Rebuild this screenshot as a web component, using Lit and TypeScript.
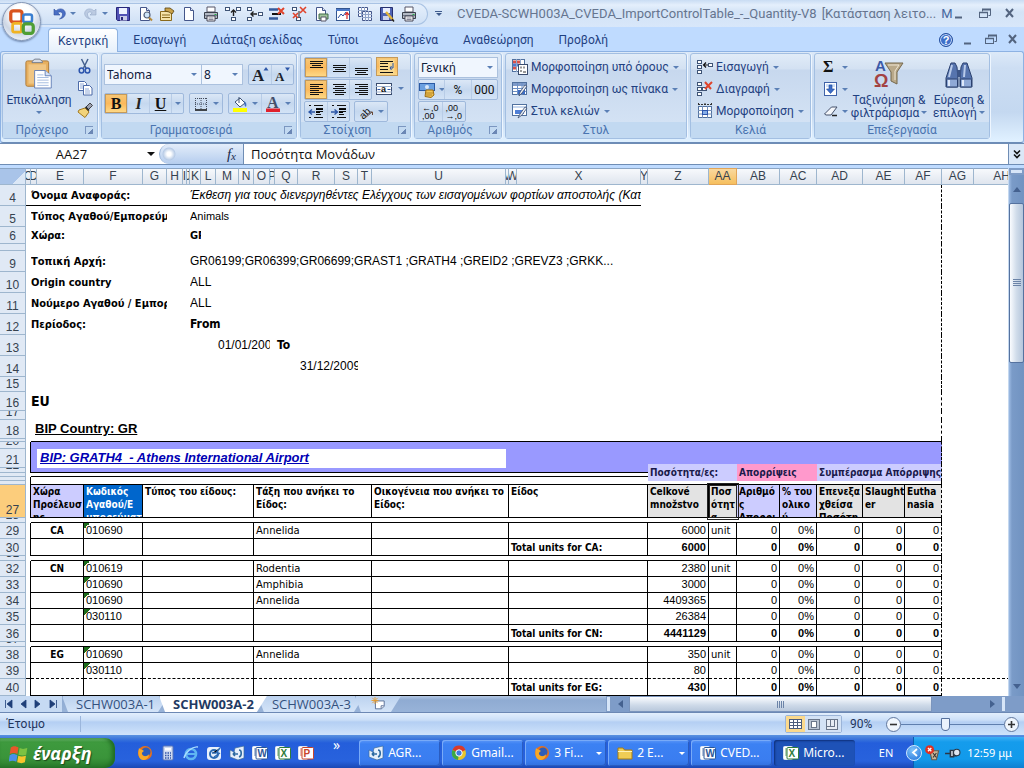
import { LitElement, html, svg, css, nothing, TemplateResult } from "lit";
import { customElement } from "lit/decorators.js";
import { classMap } from "lit/directives/class-map.js";
import { styleMap } from "lit/directives/style-map.js";

/* ---------- icons ---------- */

const icon = (body: unknown, w = 16, h = 16, vw = 16, vh = 16) =>
  html`<svg width=${w} height=${h} viewBox="0 0 ${vw} ${vh}" aria-hidden="true" class="ico">${body}</svg>`;

const arrow = html`<i class="dd"></i>`;

const lines = (rows: Array<[number, number, number]>) =>
  svg`${rows.map(([x, y, w]) => svg`<rect x=${x} y=${y} width=${w} height="1" fill="#111"/>`)}`;

const printer = svg`<path d="M4 1h8v5H4z" fill="#fff" stroke="#556"/><path d="M1.500 6.500h13v6h-13z" fill="#b3b9c4" stroke="#3a404c"/><path d="M2 9.500h12" stroke="#6f7888"/><path d="M4 10h8v5H4z" fill="#fff" stroke="#445"/><path d="M5.500 12h5M5.500 13.500h5" stroke="#889"/><rect x="11.500" y="8" width="2" height="1" fill="#2a4"/>`;
const sheet = svg`<path d="M3.500 1.500h6l3 3v10h-9z" fill="#fff" stroke="#44568a"/><path d="M9.500 1.500v3h3" fill="#dde6f5" stroke="#44568a"/>`;
const cell = (x: number, y: number, w = 4, h = 3) =>
  svg`<rect x=${x + 0.5} y=${y + 0.5} width=${w} height=${h} fill="#fff" stroke="#3f5476"/>`;

const ic = {
  undo: svg`<path d="M3 3v6h6L6.800 6.800C9 5 12 6 11.500 9c-.3 1.800-1.500 3-3 4 4-.8 6-3 5.800-6C13.800 2.500 8 1.500 5 5z" fill="#4a6fc4" stroke="#2f4f9f" stroke-width=".6"/>`,
  redo: svg`<path d="M13 3v6H7l2.200-2.200C7 5 4 6 4.500 9c.3 1.800 1.500 3 3 4-4-.8-6-3-5.800-6C2.200 2.500 8 1.500 11 5z" fill="#bccbe2" stroke="#94a8c8" stroke-width=".6"/>`,
  save: svg`<path d="M1.500 1.500h13v13h-12l-1-1z" fill="#5152b5" stroke="#26267a"/><rect x="4" y="2" width="8" height="6" fill="#eef2ff"/><rect x="5" y="10" width="7" height="4.500" fill="#c9cbe8"/><rect x="6" y="11" width="2" height="3" fill="#26267a"/>`,
  preview: svg`${sheet}<circle cx="10" cy="9" r="3" fill="#cfe6fa" stroke="#55607a" stroke-width="1.200"/><path d="M12 11.500l3 3" stroke="#b48a3c" stroke-width="2"/>`,
  props: svg`<path d="M1.500 5.500h11v9h-11z" fill="#f5e3a8" stroke="#8a6a1c"/><path d="M3 9h8M3 11.500h8" stroke="#8a6a1c"/><path d="M6 2l5 0 4 3-2 3-3-2-4-1z" fill="#caa24a" stroke="#59430f" stroke-width=".8"/>`,
  sheet,
  printer,
  rowIns: svg`${cell(0, 1)}${cell(11, 1)}${cell(6, 11)}<path d="M8.500 10V4M6 6.500L8.500 4l2.500 2.500" fill="none" stroke="#222" stroke-width="1.400"/>`,
  colIns: svg`${cell(0, 1)}${cell(0, 11)}${cell(11, 6)}<path d="M10 8H4M6.500 5.500L4 8l2.500 2.500" fill="none" stroke="#222" stroke-width="1.400"/>`,
  rowDel: svg`<path d="M0 3.500h9M0 12.500h9" stroke="#345a9c" stroke-width="2.500"/><path d="M3 8h9" stroke="#111" stroke-width="2"/><path d="M9 2l6 6M15 2L9 8" stroke="#e0442c" stroke-width="2"/>`,
  colDel: svg`${cell(1, 1)}${cell(5, 11)}<path d="M8 11V5" stroke="#222"/><path d="M9 1l6 6M15 1L9 7M2 7l5 5M7 7l-5 5" stroke="#e0442c" stroke-width="1.600"/>`,
  printDoc: svg`${sheet}<path d="M6 8h9v5H6z" fill="#9fc39a" stroke="#3f6b48"/><path d="M8 11h5v4H8z" fill="#fff" stroke="#556"/>`,
  chartUp: svg`<rect x="1.500" y="2.500" width="13" height="12" fill="#fff" stroke="#33558f"/><path d="M1 3h14v2H1z" fill="#4b78c8"/><path d="M3 12l3-4 2 2 3-4" fill="none" stroke="#2a4fa0"/><path d="M12 13V7M10 9l2-2.500L14 9" fill="none" stroke="#d22" stroke-width="1.200"/>`,
  grids: svg`<path d="M1.500 1.500h9v9h-9z" fill="#fff" stroke="#44568a"/><path d="M1 4.500h10M1 7.500h10M4.500 1v10M7.500 1v10" stroke="#8fa3c8"/><path d="M5.500 5.500h9v9h-9z" fill="#eef3fc" stroke="#44568a"/><path d="M5 8.500h10M5 11.500h10M8.500 5v10M11.500 5v10" stroke="#8fa3c8"/>`,
  saveAs: svg`<path d="M1.500 1.500h12v13h-12z" fill="#4f63b3" stroke="#26306f"/><rect x="4" y="2" width="7" height="5" fill="#e8edff"/><rect x="4" y="10" width="6" height="4" fill="#cdd3ee"/><path d="M7 6l7 8" stroke="#e3b53a" stroke-width="2.400"/><path d="M13 13l2 2.500" stroke="#222" stroke-width="1.500"/>`,

  cut: svg`<path d="M4.500 1l4.500 9M11 1L6.500 10" stroke="#44608f" stroke-width="1.500"/><ellipse cx="4.500" cy="12.500" rx="2.300" ry="2.500" fill="none" stroke="#2c55ad" stroke-width="1.500"/><ellipse cx="10.500" cy="12.500" rx="2.300" ry="2.500" fill="none" stroke="#2c55ad" stroke-width="1.500"/>`,
  copy: svg`<path d="M1.500 1.500h6l2 2v7h-8z" fill="#fff" stroke="#4c6aa8"/><path d="M3 4h4M3 6h5M3 8h5" stroke="#8fa9d8"/><path d="M6.500 5.500h6l2.500 2.500v7H6.500z" fill="#fff" stroke="#4c6aa8"/><path d="M8 9h4M8 11h5M8 13h5" stroke="#8fa9d8"/>`,
  brush: svg`<path d="M9 5l4-4 2.500 2.500-4 4z" fill="#9a9fb0" stroke="#444"/><path d="M2 8l6-2 4 4-4 5.500L1 10z" fill="#f2d37a" stroke="#a2791f"/><path d="M8.500 5l3.500 3.500" stroke="#222" stroke-width="1.600"/>`,
  growFont: svg`<text x="0" y="15" font-family="Liberation Serif" font-weight="700" font-size="17" fill="#1a1f2b">A</text><path d="M11.500 4.500L14 1l2.500 3.500z" fill="#2d57a8"/>`,
  shrinkFont: svg`<text x="1" y="15" font-family="Liberation Serif" font-weight="700" font-size="13" fill="#1a1f2b">A</text><path d="M11 1.500L13.500 5 16 1.500z" fill="#2d57a8"/>`,
  borders: svg`<path d="M2.500 2v12M8 2v12M13.500 2v12M2 2.500h12M2 8h12" stroke="#444c5c" stroke-dasharray="1 1"/><path d="M2 14h12" stroke="#111" stroke-width="1.500"/>`,
  fill: svg`<path d="M3 6l5-4 5 5-5 4z" fill="#fff" stroke="#3f5476"/><path d="M7 1v6" stroke="#3f5476"/><path d="M12 5c2 1 3 3 2 6-1-1-2-2-1.500-4z" fill="#3f6fc0"/><rect x="1" y="12" width="14" height="4" fill="#ffff00"/>`,
  fontColor: svg`<text x="2" y="12" font-family="Liberation Serif" font-weight="700" font-size="16" fill="#44506b">A</text><rect x="1" y="12.500" width="14" height="3.500" fill="#e0202c"/>`,
  alTop: lines([[2, 1, 13], [2, 3, 13], [4, 5, 9], [2, 7, 13]]),
  alMid: lines([[2, 5, 13], [2, 7, 13], [4, 9, 9], [2, 11, 13]]),
  alBot: lines([[2, 8, 13], [2, 10, 13], [4, 12, 9], [2, 14, 13]]),
  left: lines([[2, 2, 13], [2, 4, 9], [2, 6, 13], [2, 8, 9], [2, 10, 13], [2, 12, 9]]),
  center: lines([[2, 2, 13], [4, 4, 9], [2, 6, 13], [4, 8, 9], [2, 10, 13], [4, 12, 9]]),
  right: lines([[2, 2, 13], [6, 4, 9], [2, 6, 13], [6, 8, 9], [2, 10, 13], [6, 12, 9]]),
  wrap: svg`<rect x="0.500" y="0.500" width="15" height="15" fill="#f7d78e" stroke="none"/>${lines([[1, 2, 13], [1, 4, 8], [1, 7, 8], [1, 10, 8], [1, 13, 13]])}<path d="M14 4v5h-3M12.500 7L11 9l1.500 2" fill="none" stroke="#2d57a8"/>`,
  merge: svg`<rect x="0.500" y="2.500" width="15" height="11" fill="#fff" stroke="#3a4c6e"/><path d="M0 5.500h16M0 11h16" stroke="#9fb2d0"/><text x="5" y="11" font-family="Liberation Sans" font-weight="700" font-size="9" fill="#111">a</text><path d="M1.500 8.500h3M11.500 8.500h3" stroke="#2d57a8"/>`,
  outdent: svg`${lines([[1, 1, 2], [6, 1, 9], [8, 4, 7], [8, 7, 7], [8, 10, 5], [1, 13, 2], [6, 13, 9]])}<rect x="8" y="5" width="7" height="1"/><rect x="8" y="8" width="4" height="1"/><path d="M7 8H1M4 5.500L1 8l3 2.500" fill="none" stroke="#2d57a8" stroke-width="1.400"/>`,
  indent: svg`${lines([[1, 1, 2], [6, 1, 9], [8, 4, 7], [8, 7, 7], [8, 10, 5], [1, 13, 2], [6, 13, 9]])}<rect x="8" y="5" width="7" height="1"/><rect x="8" y="8" width="4" height="1"/><path d="M0 8h6M3.500 5.500L6.500 8l-3 2.500" fill="none" stroke="#2d57a8" stroke-width="1.400"/>`,
  orient: svg`<text x="0" y="13" transform="rotate(-45 6 8)" font-family="Liberation Sans" font-size="10" fill="#111">ab</text><path d="M7 14l7-6M11 8h3.500v3" fill="none" stroke="#6a4a3a"/>`,
  money: svg`<rect x="0.500" y="1.500" width="15" height="7" fill="#6ba0e0" stroke="#2b5aa4"/><circle cx="8" cy="5" r="2" fill="#d8e8fb"/><path d="M7 8h7l1 5-3 2.500-6-1z" fill="#f1c453" stroke="#9c6c12"/><path d="M6 11h8M7 13h6" stroke="#9c6c12" stroke-width=".7"/>`,
  cond: svg`<rect x="0.500" y="0.500" width="12" height="12" fill="#fff" stroke="#51719f"/><path d="M1 3h7M1 9h4" stroke="#d7504a" stroke-width="3"/><path d="M1 6h5" stroke="#4e7bd0" stroke-width="3"/><path d="M4.500 0v13M8.500 0v5" stroke="#8fa6c9"/><rect x="6.500" y="5.500" width="9" height="10" fill="#fff" stroke="#3a4c6e"/><path d="M9 7.500v2M12 7.500v2M8 12h2M11 13h3" stroke="#333"/>`,
  tableFmt: svg`<rect x="0.500" y="1.500" width="14" height="12" fill="#fff" stroke="#51719f"/><path d="M1 3.500h13" stroke="#7f9bc9" stroke-width="3"/><path d="M1 7.500h13M1 10.500h13M5.500 2v12M10 2v12" stroke="#6d8fc4"/><path d="M6 9h7v4H6z" fill="#3c6cc6"/><path d="M15 5l-5 7-3 3 1-4 5-7z" fill="#e9edf5" stroke="#3a4c6e" stroke-width=".8"/>`,
  cellStyle: svg`<rect x="0.500" y="1.500" width="14" height="11" fill="#fff" stroke="#51719f"/><path d="M1 4h13" stroke="#c7d7ef" stroke-width="2"/><path d="M3 7h9v4H3z" fill="#4f7fd6"/><path d="M15 5l-5 7-4 3 2-4 5-7z" fill="#e9edf5" stroke="#3a4c6e" stroke-width=".8"/>`,
  insert: svg`${cell(0, 1, 4, 3)}${cell(0, 6, 4, 3)}${cell(0, 11, 4, 3)}<path d="M7 6h5M9 3.500L6.500 6 9 8.500" fill="none" stroke="#111" stroke-width="1.200"/>${cell(11, 4, 4, 3)}`,
  del: svg`${cell(0, 1, 4, 3)}${cell(0, 6, 4, 3)}${cell(0, 11, 4, 3)}${cell(5, 6, 4, 3)}<path d="M8 1l6 7M15 1L8 8" stroke="#e0442c" stroke-width="2"/>`,
  format: svg`<rect x="1.500" y="3.500" width="13" height="11" fill="#fff" stroke="#51719f"/><path d="M1 7.500h14M1 11h14M5.500 3v12M10.500 3v12" stroke="#7590bb"/><path d="M1 1.500h14M1.500 0v3M14.500 0v3M8 0v3" stroke="#333" stroke-dasharray="2 1"/><rect x="5.500" y="7.500" width="5" height="4" fill="#86aee8" stroke="#2c55ad"/>`,
  fillDown: svg`<rect x="1.500" y="1.500" width="12" height="13" fill="#fff" stroke="#3f62a8"/><rect x="3" y="3" width="9" height="3" fill="#cfe0f8"/><path d="M6 4h3v4h2.500l-4 4.500L3.500 8H6z" fill="#3c6cc6" stroke="#204a9c" stroke-width=".6"/>`,
  eraser: svg`<path d="M1.500 11l7-7h5.500l-6 8H3z" fill="#f4f6fa" stroke="#44506b"/><path d="M9 12.500h5" stroke="#222" stroke-width="1.500"/>`,
};

const paste = svg`<rect x="1" y="3" width="26" height="29" rx="2" fill="#e7b060" stroke="#a9722a"/><rect x="4" y="7" width="20" height="22" fill="#f0c684"/><path d="M8 5c0-3 2-2 3-4h6c1 2 3 1 3 4z" fill="#d6dbe4" stroke="#6a7384"/><path d="M11 14h12l7 6v14H11z" fill="#fff" stroke="#5a78b4"/><path d="M23 14v6h7" fill="#d6e2f5" stroke="#5a78b4"/><path d="M14 19h7M14 22h13M14 25h13M14 28h13M14 31h13" stroke="#9db6dd"/>`;
const sortFilter = svg`<path d="M11 5h18l-6 9v12l-6-3v-9z" fill="#b9a98a" stroke="#75684d"/><path d="M14 7h11l-4 6v9" fill="none" stroke="#eee5d2"/><text x="1" y="13" font-family="Liberation Sans" font-weight="700" font-size="15" fill="#3c5aa8">A</text><text x="0" y="29" font-family="Liberation Sans" font-weight="700" font-size="18" fill="#a34242">Ω</text>`;
const binoc = svg`<path d="M6 2h4l2 4 1 12v8H1v-9z" fill="#5674ae" stroke="#2b416f"/><path d="M22 2h-4l-2 4-1 12v8h12v-9z" fill="#5674ae" stroke="#2b416f"/><rect x="12" y="9" width="4" height="7" fill="#3c5587"/><path d="M4 16l3-12M19 16l1-12" stroke="#b9cbea" stroke-width="2"/><rect x="1.500" y="18" width="11" height="8" rx="1" fill="#8fa9d6" stroke="#2b416f"/><rect x="15.500" y="18" width="11" height="8" rx="1" fill="#8fa9d6" stroke="#2b416f"/><path d="M4 19v6M18 19v6" stroke="#dfe9fa" stroke-width="2"/>`;
const officeLogo = svg`<g fill="none"><rect x="3" y="3" width="9" height="9" rx="2" stroke="#d9541e" stroke-width="2.600"/><rect x="13" y="6" width="7" height="6" rx="1.500" stroke="#3b7fd0" stroke-width="2"/><rect x="4.500" y="13" width="7" height="7" rx="1.500" stroke="#f0b323" stroke-width="2.200"/><rect x="13" y="13.500" width="8" height="7.500" rx="2" stroke="#4f9e34" stroke-width="2.600"/></g>`;

const winMin = svg`<path d="M2 10.500h7" stroke="#53647f" stroke-width="2"/>`;
const winRestore = svg`<path d="M4.500 4.500v-2h8v6h-2" fill="none" stroke="#53647f"/><path d="M4 2.500h9" stroke="#53647f" stroke-width="2"/><rect x="1.500" y="5.500" width="8" height="5" fill="none" stroke="#53647f"/><path d="M1 5.500h9" stroke="#53647f" stroke-width="1.500"/>`;
const winClose = svg`<path d="M3 2l7 8M10 2L3 10" stroke="#53647f" stroke-width="2"/>`;

const firefox = svg`<circle cx="8" cy="8" r="7" fill="#e8701a"/><circle cx="9" cy="7" r="4.500" fill="#2d5db8"/><path d="M2 3c1 2 3 1 5 3-2 1-3 3-1 4.500s5 .5 6-1.500c0 4-3 6-6 6s-6-4-4-12z" fill="#f7a928"/>`;
const calc = svg`<rect x="3" y="1" width="10" height="14" rx="1" fill="#cfdaf0" stroke="#5a76b8"/><rect x="5" y="3" width="6" height="2.500" fill="#fff"/><path d="M5 8h1.500M7.500 8H9M10 8h1M5 10.500h1.500M7.500 10.500H9M10 10.500h1M5 13h1.500M7.500 13H9M10 13h1" stroke="#3357a8" stroke-width="1.500"/>`;
const ie = svg`<circle cx="8" cy="9" r="5" fill="none" stroke="#5fb6f2" stroke-width="2.600"/><path d="M4 9h9" stroke="#5fb6f2" stroke-width="2"/><path d="M1 13C2 8 9 1 15 2" fill="none" stroke="#a9dcff" stroke-width="1.400"/>`;
const outlook = svg`<rect x="1" y="2" width="14" height="13" rx="3" fill="#e8f1fc"/><circle cx="8" cy="9" r="4" fill="none" stroke="#2b6bb4" stroke-width="2"/><path d="M6 8h4l4-5M8 12l6-4" stroke="#2b6bb4" stroke-width="1.400"/>`;
const mail = svg`<path d="M1 5l4 2 1-4 9-2v12l-6 2-8-3z" fill="#e6effb" stroke="#3a6a9c" stroke-width=".7"/><path d="M4 9h5M4 9l2-2M4 9l2 2M10 5c3 0 3 6 0 7" fill="none" stroke="#2d6aa0" stroke-width="1.600"/>`;
const office = (ch: string, c: string) =>
  svg`<rect x="0.500" y="1.500" width="9" height="13" rx="1" fill="#fff" stroke="#dfe7f3"/><path d="M2 4h5M2 6h5M2 8h5M2 10h5" stroke=${c} stroke-width=".7"/><rect x="4" y="2.500" width="11.500" height="11.500" rx="1" fill="#fff" stroke=${c}/><text x="5.500" y="12" font-family="Liberation Sans" font-weight="700" font-size="10" fill=${c}>${ch}</text>`;
const chrome = svg`<circle cx="8" cy="8" r="7" fill="#e8c52c"/><path d="M8 8L1.500 5A7 7 0 0 1 14.500 5z" fill="#d93a2b"/><path d="M8 8L1.500 5A7 7 0 0 0 7 15z" fill="#3aa845"/><circle cx="8" cy="8" r="3.200" fill="#3e7be0" stroke="#fff"/>`;
const folder = svg`<path d="M1 3h5l1.500 2H15v9H1z" fill="#f0cd55" stroke="#a57c16"/><path d="M1 6.500h14" stroke="#fff3b8"/>`;
const winFlag = svg`<path d="M1 5c3-2 5-1 7 0l-1 6c-2-1-4-1.500-7 0z" fill="#e8572a"/><path d="M9 5.500c2 1 4 1 7 0l-1 6c-2 1-4 1-7 0z" fill="#7cc242"/><path d="M0 12c3-2 5-1 7 0l-1 6c-2-1-4-1.500-7 0z" fill="#4a8fe8"/><path d="M7.800 12.500c2 1 4 1 7 0l-1 6c-2 1-4 1-7 0z" fill="#f7c52c"/>`;

const base = css`
  * { box-sizing: border-box; }
  button, input, select { font: inherit; color: inherit; margin: 0; padding: 0; border: 0; background: none; border-radius: 0; outline: 0; }
  button { display: flex; align-items: center; justify-content: center; white-space: nowrap; cursor: default; }
  .ico { display: block; flex: none; }
  .dd { width: 0; height: 0; flex: none; border: 3px solid transparent; border-top-color: #5a7fb5; border-bottom: 0; }
`;

/* ---------- ribbon ---------- */

@customElement("excel-ribbon")
export class ExcelRibbon extends LitElement {
  static styles = [
    base,
    css`
      :host { display: block; position: relative; font: 12px/16px Roboto, "Noto Sans", sans-serif; color: #1f4181; background: #bfdbff; }
      .title { height: 27px; display: flex; align-items: center; background: linear-gradient(#c9dcf3 0, #e4effc 5px, #d3e3f6 12px, #d8e7fa); padding-right: 8px; }
      .qat { display: flex; align-items: center; gap: 6px; height: 22px; padding: 0 10px 0 51px; border: 1px solid #a9c3e4; border-left: 0; border-radius: 0 12px 12px 0; background: linear-gradient(#e6f0fc, #cfe0f5); }
      .qat .pair { gap: 3px; }
      .qat .dd { margin-right: 1px; }
      .more { margin-left: 7px; flex-direction: column; gap: 1px; border: 0; }
      .more::before { content: ""; width: 7px; height: 1px; background: #3d5a8c; }
      .more .dd { border-top-color: #3d5a8c; }
      .name { flex: 1; min-width: 0; margin-left: 15px; white-space: pre; overflow: hidden; color: #66758f; font-size: 13px; line-height: 18px; display: flex; gap: 5px; }
      .name b { font-weight: 400; color: #47679f; }
      .win { display: flex; gap: 12px; }
      .tabs { height: 24px; display: flex; align-items: stretch; padding: 1px 5px 0 48px; gap: 5px; }
      .tabs button { padding: 0 10px; }
      .tabs .on { background: linear-gradient(#fff, #e6f0fb); border: 1px solid #8fb2df; border-bottom: 0; border-radius: 4px 4px 0 0; position: relative; z-index: 1; margin-bottom: -1px; padding: 0 9px; }
      .tabs .grow { flex: 1; }
      .tabs .win { align-items: center; gap: 9px; }
      .tabs .win button { padding: 0; }
      .help { width: 14px; height: 14px; border-radius: 50%; background: #3e6fc9; border: 1px solid #25509f; color: #fff; font: bold 11px/12px "Liberation Sans", sans-serif; box-shadow: inset 0 0 0 1px #cfe0fb; }
      .orb { position: absolute; left: 2px; top: 2px; width: 39px; height: 39px; border-radius: 50%; border: 1px solid #8496b4; background: radial-gradient(circle at 50% 30%, #fff 30%, #cdd6e4 60%, #eef3fb 85%); box-shadow: 0 1px 2px #6b83a9; z-index: 2; }
      .ribbon { height: 92px; border: 1px solid #8db2e3; border-radius: 3px; border-bottom-color: #6d8db8; background: linear-gradient(#dce9f8 0, #cddef3 16px, #c4d8f0 60px, #dff0ff 88px); display: flex; padding: 1px 1px 3px; gap: 3px; }
      .group { display: flex; flex-direction: column; border: 1px solid #a3bfe2; border-radius: 3px; background: linear-gradient(#e1ecf8 0, #d3e1f2 15px, #c7d8ee 16px, #d7e5f6); box-shadow: 1px 0 0 #eef6ff; }
      .body { flex: 1; min-height: 0; display: flex; }
      .cap { height: 16px; flex: none; line-height: 16px; background: #c2d9f1; color: #4a74b0; display: flex; justify-content: center; position: relative; }
      .launched { padding-right: 16px; }
      .launch { position: absolute; right: 4px; top: 4px; width: 8px; height: 8px; border: 1px solid #7b96c0; border-right: 0; border-bottom: 0; background: linear-gradient(135deg, transparent 45%, #6b87b5 45%) right bottom / 5px 5px no-repeat; }
      .col { display: flex; flex-direction: column; }
      .row { display: flex; }
      .set { display: flex; border: 1px solid #9fb9dc; border-radius: 2px; background: linear-gradient(#dbe7f6, #c5d8ef 50%, #d3e3f6); }
      .set button, .solo { height: 19px; min-width: 22px; gap: 4px; }
      .set .slim { min-width: 12px; }
      .set .on, .solo.on { background: linear-gradient(#f6c878, #fbb95c 50%, #fedc8a); outline: 1px solid #c59a5a; outline-offset: -1px; }
      .set button + button { border-left: 1px solid #b8cce6; }
      select { appearance: none; background: #f0f6fe url("data:image/svg+xml,%3Csvg xmlns='http://www.w3.org/2000/svg' width='6' height='3'%3E%3Cpath d='M0 0h6L3 3z' fill='%235a7fb5'/%3E%3C/svg%3E") right 4px center no-repeat; border: 1px solid #abc1de; height: 21px; padding-left: 2px; color: #10203c; }
      .g1 { width: 96px; } .g2 { width: 196px; } .g3 { width: 111px; } .g4 { width: 88px; } .g5 { width: 182px; } .g6 { width: 121px; } .g7 { width: 176px; }
      .big { flex-direction: column; line-height: 13px; }
      .pasteBtn { width: 72px; justify-content: flex-start; padding-top: 4px; gap: 4px; }
      .clip { gap: 6px; padding-top: 4px; width: 20px; align-items: center; }
      .fontBody { padding: 10px 2px 0; flex-direction: column; gap: 8px; }
      .fontBody .row { gap: 5px; }
      .fontBody select { font-family: "Noto Sans", sans-serif; }
      .fname { width: 98px; } .fsize { width: 42px; margin-left: -6px; }
      .b { font: bold 16px "Liberation Serif", serif; color: #111; } .i { font: italic bold 16px "Liberation Serif", serif; color: #222; } .u { font: bold 16px "Liberation Serif", serif; color: #111; text-decoration: underline; }
      .wide button { padding: 0 3px; }
      .al { padding: 3px 3px 0; flex-direction: column; gap: 1px; }
      .al .row { gap: 4px; }
      .merge { gap: 6px; }
      .num { padding: 3px 3px 0; flex-direction: column; gap: 1px; }
      .num .set { align-self: stretch; }
      .num .set.part { align-self: flex-start; }
      .num .set button { padding: 0 3px; flex: 1; min-width: 20px; color: #111; }
      .dec { font: 9px/8px "Liberation Sans", sans-serif; text-align: left; white-space: pre; }
      .list { padding: 2px 0 0 6px; flex-direction: column; justify-content: flex-start; align-items: flex-start; }
      .list button { height: 22px; gap: 3px; }
      .list .dd { margin-left: 1px; }
      .ed { padding: 2px 0 0 8px; gap: 0; }
      .ed .col { width: 28px; }
      .ed .col button { height: 22px; gap: 3px; justify-content: flex-start; }
      .sigma { font: bold 16px "Liberation Serif", serif; color: #111; width: 16px; text-align: left; }
      .sort { width: 76px; } .find { width: 58px; margin-left: 3px; }
      .ed .big { height: 64px; gap: 5px; justify-content: flex-end; }
      .two { display: block; text-align: center; line-height: 13px; }
      .two .dd { display: inline-block; vertical-align: 3px; margin-left: 2px; }
    `,
  ];

  private group(cls: string, label: string, body: TemplateResult, launch = false) {
    return html`<section class="group ${cls}">${body}
      <div class="cap ${launch ? "launched" : ""}">${label}${launch ? html`<button class="launch" aria-label=${label}></button>` : nothing}</div>
    </section>`;
  }

  render() {
    const quick: Array<[string, unknown]> = [
      ["Αποθήκευση", ic.save], ["Προεπισκόπηση", ic.preview], ["Ιδιότητες", ic.props], ["Δημιουργία", ic.sheet],
      ["Εκτύπωση", ic.printer], ["Εισαγωγή γραμμών", ic.rowIns], ["Εισαγωγή στηλών", ic.colIns], ["Διαγραφή γραμμών", ic.rowDel],
      ["Διαγραφή στηλών", ic.colDel], ["Γρήγορη εκτύπωση", ic.printDoc], ["Γράφημα", ic.chartUp], ["Φύλλα", ic.grids],
      ["Αποθήκευση ως", ic.saveAs], ["Εκτυπωτής", ic.printer],
    ];
    const menu = ["Εισαγωγή", "Διάταξη σελίδας", "Τύποι", "Δεδομένα", "Αναθεώρηση", "Προβολή"];
    return html`
      <button class="orb" aria-label="Office">${icon(officeLogo, 30, 30, 24, 24)}</button>
      <header class="title">
        <div class="qat">
          <button class="pair" aria-label="Αναίρεση">${icon(ic.undo)}${arrow}</button>
          <button class="pair" aria-label="Επανάληψη">${icon(ic.redo)}${arrow}</button>
          ${quick.map(([l, g]) => html`<button aria-label=${l}>${icon(g)}</button>`)}
        </div>
        <button class="more" aria-label="Προσαρμογή">${arrow}</button>
        <div class="name"><span>CVEDA-SCWH003A_CVEDA_ImportControlTable_-_Quantity-V8</span><span>[Κατάσταση λειτο...</span><b>M</b></div>
        <div class="win">
          <button aria-label="Ελαχιστοποίηση">${icon(winMin, 13, 13, 13, 13)}</button>
          <button aria-label="Επαναφορά">${icon(winRestore, 13, 13, 13, 13)}</button>
          <button aria-label="Κλείσιμο">${icon(winClose, 13, 13, 13, 13)}</button>
        </div>
      </header>
      <nav class="tabs">
        <button class="on">Κεντρική</button>
        ${menu.map((m) => html`<button>${m}</button>`)}
        <span class="grow"></span>
        <div class="win">
          <button class="help" aria-label="Βοήθεια">?</button>
          <button aria-label="Ελαχιστοποίηση βιβλίου">${icon(winMin, 13, 13, 13, 13)}</button>
          <button aria-label="Επαναφορά βιβλίου">${icon(winRestore, 13, 13, 13, 13)}</button>
          <button aria-label="Κλείσιμο βιβλίου">${icon(winClose, 13, 13, 13, 13)}</button>
        </div>
      </nav>
      <div class="ribbon">
        ${this.group("g1", "Πρόχειρο", html`<div class="body">
          <button class="big pasteBtn">${icon(paste, 28, 32, 32, 36)}<span>Επικόλληση</span>${arrow}</button>
          <div class="col clip">
            <button aria-label="Αποκοπή">${icon(ic.cut)}</button>
            <button aria-label="Αντιγραφή">${icon(ic.copy)}</button>
            <button aria-label="Πινέλο">${icon(ic.brush)}</button>
          </div></div>`, true)}
        ${this.group("g2", "Γραμματοσειρά", html`<div class="body fontBody">
          <div class="row">
            <select class="fname" aria-label="Γραμματοσειρά"><option>Tahoma</option></select>
            <select class="fsize" aria-label="Μέγεθος"><option>8</option></select>
            <div class="set"><button aria-label="Μεγέθυνση">${icon(ic.growFont, 17, 17, 17, 17)}</button><button aria-label="Σμίκρυνση">${icon(ic.shrinkFont, 17, 17, 17, 17)}</button></div>
          </div>
          <div class="row">
            <div class="set"><button class="b on">B</button><button class="i">I</button><button class="u">U</button><button class="slim" aria-label="Τύπος υπογράμμισης">${arrow}</button></div>
            <div class="set wide"><button aria-label="Περιγράμματα">${icon(ic.borders)}${arrow}</button></div>
            <div class="set wide"><button aria-label="Χρώμα γεμίσματος">${icon(ic.fill)}${arrow}</button><button aria-label="Χρώμα γραμματοσειράς">${icon(ic.fontColor)}${arrow}</button></div>
          </div></div>`, true)}
        ${this.group("g3", "Στοίχιση", html`<div class="body al">
          <div class="row">
            <div class="set"><button class="on" aria-label="Επάνω">${icon(ic.alTop)}</button><button aria-label="Μέση">${icon(ic.alMid)}</button><button aria-label="Κάτω">${icon(ic.alBot)}</button></div>
            <button class="solo on" aria-label="Αναδίπλωση">${icon(ic.wrap)}</button>
          </div>
          <div class="row">
            <div class="set"><button class="on" aria-label="Αριστερά">${icon(ic.left)}</button><button aria-label="Κέντρο">${icon(ic.center)}</button><button aria-label="Δεξιά">${icon(ic.right)}</button></div>
            <button class="solo merge" aria-label="Συγχώνευση">${icon(ic.merge)}${arrow}</button>
          </div>
          <div class="row">
            <div class="set"><button aria-label="Μείωση εσοχής">${icon(ic.outdent)}</button><button aria-label="Αύξηση εσοχής">${icon(ic.indent)}</button></div>
            <div class="set wide"><button aria-label="Προσανατολισμός">${icon(ic.orient)}${arrow}</button></div>
          </div></div>`, true)}
        ${this.group("g4", "Αριθμός", html`<div class="body num">
          <select aria-label="Μορφή αριθμού"><option>Γενική</option></select>
          <div class="set"><button aria-label="Νόμισμα">${icon(ic.money)}${arrow}</button><button>%</button><button>000</button></div>
          <div class="set part"><button class="dec">${"←,0\n,00"}</button><button class="dec">${",00\n→,0"}</button></div>
          </div>`, true)}
        ${this.group("g5", "Στυλ", html`<div class="body list">
          <button>${icon(ic.cond)}Μορφοποίηση υπό όρους${arrow}</button>
          <button>${icon(ic.tableFmt)}Μορφοποίηση ως πίνακα${arrow}</button>
          <button>${icon(ic.cellStyle)}Στυλ κελιών${arrow}</button></div>`)}
        ${this.group("g6", "Κελιά", html`<div class="body list">
          <button>${icon(ic.insert)}Εισαγωγή${arrow}</button>
          <button>${icon(ic.del)}Διαγραφή${arrow}</button>
          <button>${icon(ic.format)}Μορφοποίηση${arrow}</button></div>`)}
        ${this.group("g7", "Επεξεργασία", html`<div class="body ed">
          <div class="col">
            <button><span class="sigma">Σ</span>${arrow}</button>
            <button aria-label="Συμπλήρωση">${icon(ic.fillDown)}${arrow}</button>
            <button aria-label="Απαλοιφή">${icon(ic.eraser)}${arrow}</button>
          </div>
          <button class="big sort">${icon(sortFilter, 30, 31, 30, 31)}<span class="two">Ταξινόμηση &amp;<br />φιλτράρισμα${arrow}</span></button>
          <button class="big find">${icon(binoc, 28, 28, 28, 28)}<span class="two">Εύρεση &amp;<br />επιλογή${arrow}</span></button>
          </div>`)}
      </div>`;
  }
}

/* ---------- worksheet ---------- */

const COLS: Array<[string, number]> = [
  ["C", 5], ["D", 6], ["E", 47], ["F", 59], ["G", 24], ["H", 16], ["I", 4], ["J", 3], ["K", 11], ["L", 15], ["M", 23],
  ["N", 15], ["O", 16], ["P", 5], ["Q", 23], ["R", 37], ["S", 23], ["T", 14], ["U", 134], ["V", 3], ["W", 8], ["X", 124],
  ["Y", 7], ["Z", 61], ["AA", 28], ["AB", 43], ["AC", 37], ["AD", 46], ["AE", 42], ["AF", 37], ["AG", 32], ["AH", 0],
];
const at = (name: string) => COLS.findIndex(([n]) => n === name);

interface Cell { from: string; to: string; text?: string; cls?: string; rows?: number; skip?: boolean; }
interface Row { n: string; h: number; cells: Cell[]; cls?: string; headRows?: number; headSkip?: boolean; }

const c = (range: string, text = "", cls = "", rows = 1): Cell => {
  const [from, to] = range.split(":");
  return { from, to: to ?? from, text, cls, rows };
};
const skip = (range: string): Cell => ({ ...c(range), skip: true });
const row = (n: string, h: number, ...cells: Cell[]): Row => ({ n, h, cells });

const BLOCKS = ["D:E", "F", "G:N", "O:T", "U:V", "W:Y", "Z", "AA", "AB", "AC", "AD", "AE", "AF"];
const record = (n: string, h: number, values: string[], kind = ""): Row =>
  row(n, h, c("C", "", "r"), ...BLOCKS.map((b, i) => {
    const cls = ["r", "b", kind];
    if (i === 0) cls.push("country");
    if (i === 1 && values[i]) cls.push("code");
    if (i === 3) cls.push("taxon");
    if (i === 5) cls.push("tot");
    if (i >= 6 && i !== 7) cls.push("num");
    if (i === 7) cls.push("taxon");
    return c(b, values[i] ?? "", cls.join(" "));
  }));
const line = (n: string, country: string, code: string, order: string, qty: string, unit: string, kind = "") =>
  record(n, 16, [country, code, "", order, "", "", qty, unit, "0", "0%", "0", "0", "0"], kind);
const total = (n: string, country: string, qty: string) =>
  record(n, 17, ["", "", "", "", "", `Total units for ${country}:`, qty, "", "0", "0%", "0", "0", "0"], "strong");
const spacer = (n: string): Row => row(n, 5, c("D:AF", "", "b"));

const ROWS: Row[] = [
  row("4", 21, c("C", "", "b"), c("D:G", "Όνομα Αναφοράς:", "b lab"), c("H:J", "", "b"), c("K:X", "Έκθεση για τους διενεργηθέντες Ελέγχους των εισαγομένων φορτίων αποστολής (Κατηγορία)", "b ital")),
  row("5", 21, c("D:G", "Τύπος Αγαθού/Εμπορεύματος", "lab"), c("K:X", "Animals", "small")),
  row("6", 17, c("D:G", "Χώρα:", "lab"), c("K", "GR", "lab")),
  row("", 7),
  row("9", 21, c("D:G", "Τοπική Αρχή:", "lab"), c("K:X", "GR06199;GR06399;GR06699;GRAST1 ;GRATH4 ;GREID2 ;GREVZ3 ;GRKK...", "val")),
  row("10", 21, c("D:G", "Origin country", "lab"), c("K:X", "ALL", "val")),
  row("11", 21, c("D:G", "Νούμερο Αγαθού / Εμπορεύματος", "lab"), c("K:X", "ALL", "val")),
  row("12", 21, c("D:G", "Περίοδος:", "lab"), c("K:X", "From", "lab mid")),
  row("13", 21, c("M:O", "01/01/2009", "val pad"), c("Q:X", "To", "lab mid pad")),
  row("14", 21, c("R:S", "31/12/2009", "val pad")),
  row("15", 15),
  row("16", 19, c("D:G", "EU", "eu")),
  row("17", 9),
  row("18", 19, c("D:S", "BIP Country: GR", "bip")),
  row("", 3, c("D:AF", "", "b")),
  row("20", 7, c("C", "", "r"), c("D:AF", "", "band")),
  { ...row("21", 15, c("C", "", "r"), c("D", "", "band"), c("E:U", "BIP: GRATH4  - Athens International Airport", "airport", 2), c("V:AF", "", "band")), headRows: 2 },
  { ...row("", 4, c("C", "", "r"), c("D", "", "band"), skip("E:U"), c("V:Y", "", "band"), c("Z:AA", "Ποσότητα/ες:", "tag", 4), c("AB:AC", "Απορρίψεις", "tag pink", 4), c("AD:AF", "Συμπέρασμα Απόρριψης:", "tag", 4)), headSkip: true },
  row("22", 5, c("C", "", "r"), c("D:Y", "", "band b"), skip("Z:AA"), skip("AB:AC"), skip("AD:AF")),
  row("23", 4, c("D:Y", "", "b"), skip("Z:AA"), skip("AB:AC"), skip("AD:AF")),
  row("25", 4, c("C", "", "r"), c("D:Y"), skip("Z:AA"), skip("AB:AC"), skip("AD:AF")),
  row("", 4, c("C", "", "r"), c("D:AF", "", "b")),
  { ...row("27", 33,
    c("C", "", "r"),
    c("D:E", "Χώρα\nΠροέλευσ\nης", "r b th lav"), c("F", "Κωδικός\nΑγαθού/Ε\nμπορεύματ", "r b th blue"),
    c("G:N", "Τύπος του είδους:", "r b th"), c("O:T", "Τάξη που ανήκει το\nΕίδος:", "r b th"),
    c("U:V", "Οικογένεια που ανήκει το\nΕίδος:", "r b th"), c("W:Y", "Είδος", "r b th"),
    c("Z", "Celkové\nmnožstvo", "r b th gray"), c("AA", "Ποσ\nότητ\nα", "r b th gray sel"),
    c("AB", "Αριθμό\nς\nΑπορρι", "r b th lav"), c("AC", "% του\nολικο\nύ", "r b th lav"),
    c("AD", "Επενεξα\nχθείσα\nΠοσότη", "r b th gray"), c("AE", "Slaught\ner", "r b th gray"), c("AF", "Eutha\nnasia", "r b th gray")), cls: "active" },
  spacer("28"),
  line("29", "CA", "010690", "Annelida", "6000", "unit"),
  total("30", "CA", "6000"),
  spacer("31"),
  line("32", "CN", "010619", "Rodentia", "2380", "unit"),
  line("33", "", "010690", "Amphibia", "3000", ""),
  line("34", "", "010690", "Annelida", "4409365", ""),
  line("35", "", "030110", "", "26384", ""),
  total("36", "CN", "4441129"),
  spacer("37"),
  line("38", "EG", "010690", "Annelida", "350", "unit"),
  { ...line("39", "", "030110", "", "80", ""), cls: "page" },
  total("40", "EG", "430"),
];

@customElement("sheet-grid")
export class SheetGrid extends LitElement {
  static styles = [
    base,
    css`
      :host { display: flex; min-height: 0; overflow: hidden; background: #fff; font: 12px/14px "Liberation Sans", sans-serif; color: #000; }
      .view { flex: 1; min-width: 0; overflow: hidden; }
      table { table-layout: fixed; width: calc(100% + 22px); border-spacing: 0; }
      th, td { padding: 0; font-weight: 400; line-height: 0; text-align: left; overflow: hidden; vertical-align: top; }
      .in { height: calc(var(--h) - 1px); display: flex; align-items: center; line-height: 13px; white-space: pre; overflow: hidden; }
      thead th { height: 17px; border-right: 1px solid #9eb6ce; border-bottom: 1px solid #9eb6ce; border-top: 1px solid #8ba5c4; background: linear-gradient(#f7f9fc, #dfe5ee); color: #36424f; }
      thead .in { --h: 16px; justify-content: center; }
      thead .hot { background: linear-gradient(#f9d99f, #f6bf5e); border-color: #e0a55a; }
      thead .corner { background: linear-gradient(135deg, #a9c4e9 70%, #dbe7f6 70%); }
      tbody th { background: #e0e9f5; border-right: 1px solid #9eb6ce; border-bottom: 1px solid #9eb6ce; color: #36424f; }
      tbody th .in { align-items: flex-end; justify-content: center; line-height: 14px; }
      tr.active th { background: #fccd7c; }
      .r { border-right: 1px solid #000; }
      .b { border-bottom: 1px solid #000; }
      .end { border-right: 1px dashed #000; }
      tr.page td { border-bottom: 1px dashed #000; }
      .lab, .tot, .country, .th, .tag { font-family: "DejaVu Sans Condensed", "DejaVu Sans", sans-serif; font-weight: 700; font-size: 11px; }
      .mid .in { font-size: 12px; }
      .small { font-size: 11px; }
      .pad .in { padding-left: 2px; }
      .ital { font-style: italic; font-size: 12px; }
      .eu { font: bold 14px "DejaVu Sans Condensed", sans-serif; }
      .bip { font: bold 13px "Liberation Sans", sans-serif; text-decoration: underline; }
      .bip .in { padding-left: 4px; }
      .bip .in, .airport .in { line-height: 16px; }
      .band { background: #9999ff; }
      .airport { font: italic bold 13px "Liberation Sans", sans-serif; color: #0000b4; text-decoration: underline; vertical-align: top; }
      .airport .in { height: 18px; padding-left: 3px; }
      .tag { background: #ccccff; color: #1a1a4a; font-size: 10px; }
      .tag .in { height: 16px; padding-left: 2px; }
      .pink { background: #ff99cc; }
      .th { font-size: 10px; }
      .th .in { align-items: flex-start; padding: 0 2px; line-height: 13px; }
      .lav { background: #ccccff; }
      .gray { background: #e3e3e3; }
      .blue { background: #0066cc; color: #fff; }
      .sel { outline: 3px double #222; outline-offset: -1px; position: relative; }
      .country { font-size: 10px; }
      .country .in { justify-content: center; padding-bottom: 1px; }
      .code { font-size: 11px; background: linear-gradient(135deg, #1c6b1c 50%, transparent 50%) left top / 6px 6px no-repeat; }
      .code .in { padding-left: 2px; }
      .taxon { font: 10px "DejaVu Sans", sans-serif; }
      .taxon .in { padding: 0 0 1px 2px; }
      .tot { font-size: 10px; }
      .tot .in { padding-left: 2px; }
      .num { font-size: 11px; }
      .num .in { justify-content: flex-end; padding-right: 2px; }
      .strong { font-weight: 700; }
      .bar { width: 16px; display: flex; flex-direction: column; background: linear-gradient(90deg, #9dbbe3, #7a9bc8 3px, #7193c1); border-left: 1px solid #c4d8f0; }
      .split { height: 7px; background: #d6e5f8; border: 2px solid #7f9cc6; }
      .bar button { height: 28px; }
      .up, .down { width: 0; height: 0; border: 4px solid transparent; }
      .up { border-bottom: 5px solid #44618f; border-top: 0; }
      .down { border-top: 5px solid #44618f; border-bottom: 0; }
      .thumb { height: 160px; border: 1px solid #55729f; border-radius: 2px; background: linear-gradient(90deg, #fafcff, #d0dcea 50%, #b5c6dc); display: flex; align-items: center; justify-content: center; }
      .grip { width: 8px; height: 8px; background: repeating-linear-gradient(#6c84a8 0 1px, transparent 1px 2px); }
      .rest { flex: 1; }
      .bar .low { height: 20px; }
    `,
  ];

  private renderCell(cell: Cell, h: number) {
    const span = at(cell.to) - at(cell.from) + 1;
    const end = cell.to === "AF";
    return html`<td class="${cell.cls ?? ""} ${end ? "end" : ""}" colspan=${span} rowspan=${cell.rows ?? 1}>${cell.text
      ? html`<div class="in" style=${styleMap({ "--h": `${h}px` })}>${cell.text}</div>` : nothing}</td>`;
  }

  private renderRow(r: Row) {
    const out: unknown[] = [];
    let next = 0;
    const fill = (until: number) => {
      const stop = at("AF") + 1;
      if (next < stop && until > next) {
        const to = Math.min(until, stop) - 1;
        out.push(this.renderCell({ from: COLS[next][0], to: COLS[to][0] }, r.h));
        next = to + 1;
      }
      if (until > next) {
        out.push(this.renderCell({ from: COLS[next][0], to: COLS[until - 1][0] }, r.h));
        next = until;
      }
    };
    for (const cell of r.cells) {
      fill(at(cell.from));
      if (!cell.skip) out.push(this.renderCell(cell, r.h));
      next = at(cell.to) + 1;
    }
    fill(COLS.length);
    const headH = r.headRows ? r.h + 4 : r.h;
    return html`<tr class=${r.cls ?? ""} style=${styleMap({ height: `${r.h}px` })}>
      ${r.headSkip ? nothing : html`<th scope="row" rowspan=${r.headRows ?? 1}><div class="in" style=${styleMap({ "--h": `${headH}px` })}>${r.n}</div></th>`}${out}</tr>`;
  }

  render() {
    return html`
      <div class="view">
        <table>
          <colgroup><col style="width:26px" />${COLS.map(([, w]) => html`<col style=${styleMap({ width: w ? `${w}px` : "auto" })} />`)}</colgroup>
          <thead><tr><th class="corner"></th>${COLS.map(([n]) => html`<th scope="col" class=${classMap({ hot: n === "AA" })}><div class="in">${n}</div></th>`)}</tr></thead>
          <tbody>${ROWS.map((r) => this.renderRow(r))}</tbody>
        </table>
      </div>
      <div class="bar">
        <div class="split"></div>
        <button aria-label="Κύλιση επάνω"><i class="up"></i></button>
        <div class="thumb"><i class="grip"></i></div>
        <div class="rest"></div>
        <button class="low" aria-label="Κύλιση κάτω"><i class="down"></i></button>
      </div>`;
  }
}

/* ---------- taskbar ---------- */

@customElement("task-bar")
export class TaskBar extends LitElement {
  static styles = [
    base,
    css`
      :host { display: flex; align-items: stretch; height: 33px; padding-top: 3px; font: 12px/16px "Noto Sans", sans-serif; color: #fff; background: linear-gradient(#5a92e0 0, #3a75dc 4px, #245edb 8px, #2862dd 26px, #1b48b4); }
      .start { width: 115px; gap: 5px; padding-left: 9px; justify-content: flex-start; border-radius: 0 10px 10px 0; background: linear-gradient(#7ac47a 0, #3e9a3e 4px, #3a943a 20px, #2a7a2c); font: italic bold 18px "Noto Sans", sans-serif; text-shadow: 1px 1px 1px #1b4a1b; box-shadow: inset -3px 0 4px #1f6a22; }
      .quick { display: flex; align-items: center; gap: 7px; padding: 0 19px 0 22px; }
      .chev { align-self: flex-start; font-size: 14px; line-height: 14px; }
      .tasks { display: flex; gap: 2px; flex: 1; min-width: 0; margin-left: 19px; padding: 2px 0; }
      .tasks button { width: 81px; justify-content: flex-start; gap: 4px; padding: 0 4px 0 9px; border-radius: 3px; background: linear-gradient(#5a96f8, #3c81f3 4px, #3a7df0 20px, #3170de); box-shadow: inset 1px 1px 0 #78aaf8, inset -1px -1px 0 #2a5cc0; }
      .tasks .on { background: #1e52b7; box-shadow: inset 1px 1px 2px #0e2f78; }
      .tasks .dd { margin-left: auto; border-top-color: #fff; }
      .lang { padding: 0 20px 0 8px; display: flex; align-items: center; font-size: 11px; }
      .tray { display: flex; align-items: center; gap: 2px; padding-right: 12px; background: linear-gradient(#3fb0f5 0, #159cec 5px, #129aeb 22px, #0f7fd0); border-left: 1px solid #0c5cae; margin-top: -1px; }
      .hide { width: 16px; height: 16px; margin-left: -8px; border-radius: 50%; background: radial-gradient(circle at 40% 30%, #7fc4fb, #1d6fd8); border: 1px solid #cfe8ff; }
      .clock { margin-left: 4px; font-size: 11px; }
    `,
  ];

  render() {
    const quick: Array<[string, unknown]> = [
      ["Firefox", firefox], ["Αριθμομηχανή", calc], ["Internet Explorer", ie], ["Outlook", outlook], ["Αλληλογραφία", mail],
      ["Word", office("W", "#2b5797")], ["Excel", office("X", "#2f7d3b")], ["PowerPoint", office("P", "#c8452a")],
    ];
    const tasks: Array<[string, unknown, boolean, boolean]> = [
      ["AGR...", mail, false, false], ["Gmail...", chrome, false, false], ["3 Fi...", firefox, true, false],
      ["2 E...", folder, true, false], ["CVED...", office("W", "#2b5797"), false, false], ["Micro...", office("X", "#2f7d3b"), false, true],
    ];
    return html`
      <button class="start">${icon(winFlag, 19, 22, 16, 20)}<span>έναρξη</span></button>
      <div class="quick">${quick.map(([l, g]) => html`<button aria-label=${l}>${icon(g)}</button>`)}</div>
      <span class="chev">»</span>
      <div class="tasks">${tasks.map(([t, g, menu, on]) => html`<button class=${classMap({ on })}>${icon(g)}<span>${t}</span>${menu ? arrow : nothing}</button>`)}</div>
      <div class="lang">EN</div>
      <div class="tray">
        <button class="hide" aria-label="Εμφάνιση εικονιδίων">${icon(svg`<path d="M7 1L3 4.500 7 8" fill="none" stroke="#fff" stroke-width="1.800"/>`, 9, 9, 9, 9)}</button>
        ${icon(svg`<path d="M5 6h8l-2 8H7z" fill="#c9b79a" stroke="#6a5a48"/><path d="M8 8l3 4M11 8l-3 4" stroke="#333"/><circle cx="5" cy="5" r="4" fill="#e03020"/><path d="M3.500 3.500l3 3M6.500 3.500l-3 3" stroke="#fff" stroke-width="1.200"/>`, 18, 18)}
        ${icon(svg`<path d="M1 9h5M6 6h3v6H6zM9 7h3M9 11h3" fill="#c6cbd4" stroke="#2c3644" stroke-width="1.400"/><circle cx="12" cy="8" r="3" fill="#dfe6f0" stroke="#2c3644"/>`, 17, 17)}
        <span class="clock">12:59 μμ</span>
      </div>`;
  }
}

/* ---------- window ---------- */

@customElement("app-root")
export class AppRoot extends LitElement {
  static styles = [
    base,
    css`
      :host { display: flex; flex-direction: column; height: 100vh; overflow: hidden; background: #bfdbff; font: 12px/16px Roboto, "Noto Sans", sans-serif; color: #10203c; }
      .formula { display: flex; height: 22px; border-top: 1px solid #6f8db5; border-bottom: 1px solid #6f8db5; background: #fff; margin-bottom: 3px; font: 13px "Open Sans", "Noto Sans", sans-serif; }
      .cellname { width: 143px; text-align: center; background: #fff; color: #111; }
      .nb { width: 16px; } .nb .dd { border-top-color: #111; border-width: 4px 4px 0; }
      .fx { width: 85px; border-left: 1px solid #9ab4d8; border-radius: 10px 0 0 10px; background: radial-gradient(circle at 9px 10px, #fff 0 2px, #b7cbe6 6px, transparent 7px), linear-gradient(#e3edfa, #b5cdee); justify-content: flex-end; padding-right: 7px; font: italic 15px "Liberation Serif", serif; color: #1b2c4d; border-right: 1px solid #6f8db5; }
      .fx sub { font-size: 11px; vertical-align: -1px; }
      .value { flex: 1; min-width: 0; padding-left: 7px; color: #111; }
      .expand { width: 16px; background: #dbe8f8; border-left: 1px solid #6f8db5; }
      sheet-grid { flex: 1; }
      .strip { height: 17px; display: flex; background: linear-gradient(#b3c7e3, #8fabd2 4px, #98b3d8); border-bottom: 1px solid #6c88b4; overflow: hidden; }
      .nav { width: 62px; display: flex; justify-content: space-around; background: #c6daf3; padding: 0 2px; }
      .sheets { display: flex; }
      .sheets button { font: 13px/16px "Open Sans", "Noto Sans", sans-serif; color: #34517e; background: linear-gradient(#bcd2ef, #d4e4f8); padding: 0 13px; border-left: 1px solid #8aa5cc; clip-path: polygon(0 0, 100% 0, calc(100% - 10px) 100%, 6px 100%); margin-right: -9px; }
      .sheets .on { background: #fff; font-weight: 700; color: #1f3a63; z-index: 1; }
      .sheets .new { width: 46px; }
      .fill { flex: 1; }
      .hs { width: 418px; display: flex; background: #7e9cc8; }
      .hs .sp { width: 5px; background: #d6e5f8; border: 1px solid #7f9cc6; }
      .hs button { width: 18px; }
      .lf, .rt { width: 0; height: 0; border: 4px solid transparent; }
      .lf { border-right: 5px solid #44618f; border-left: 0; }
      .rt { border-left: 5px solid #44618f; border-right: 0; }
      .hthumb { width: 303px; border: 1px solid #7b95bd; background: linear-gradient(#fafcff, #cdd9e8 60%, #b9c8dc); display: flex; align-items: center; justify-content: center; }
      .hgrip { width: 8px; height: 7px; background: repeating-linear-gradient(90deg, #6c84a8 0 1px, transparent 1px 2px); }
      .status { height: 22px; display: flex; align-items: center; padding: 0 5px 0 7px; background: linear-gradient(#e3effd, #cbdff8 7px, #b4cff3 9px, #cfe3fb); color: #1f355c; }
      .ready { width: 74px; border-right: 1px solid #9bb6dc; }
      .views { display: flex; margin-right: 8px; border: 1px solid #9bb4d8; border-radius: 2px; }
      .views button { width: 18px; height: 16px; background: #d3e2f5; }
      .views .on { background: #fbd98c; width: 19px; }
      .pct { width: 36px; }
      .zb { width: 15px; height: 15px; border: 1px solid #60779e; border-radius: 50%; background: #f0f6fd; color: #333; }
      input[type="range"] { appearance: none; width: 103px; height: 16px; background: linear-gradient(#5f7fae, #5f7fae) center / 100% 1px no-repeat; }
      input[type="range"]::-webkit-slider-thumb { appearance: none; width: 9px; height: 13px; border: 1px solid #55709c; background: #eaf2fc; border-radius: 1px 1px 5px 5px; }
      .zoom { display: flex; align-items: center; }
    `,
  ];

  render() {
    const nav: Array<[string, string]> = [
      ["Πρώτο", "M1.500 1v8M8 1L3 5l5 4z"], ["Προηγούμενο", "M7 1L2 5l5 4z"], ["Επόμενο", "M2 1l5 4-5 4z"], ["Τελευταίο", "M8.500 1v8M2 1l5 4-5 4z"],
    ];
    return html`
      <excel-ribbon></excel-ribbon>
      <div class="formula">
        <input class="cellname" aria-label="Πλαίσιο ονόματος" value="AA27" />
        <button class="nb" aria-label="Ονόματα">${arrow}</button>
        <button class="fx"><span>f<sub>x</sub></span></button>
        <input class="value" aria-label="Γραμμή τύπων" value="Ποσότητα Μονάδων" />
        <button class="expand" aria-label="Ανάπτυξη">${icon(svg`<path d="M2 1.500l3 3 3-3M2 5.500l3 3 3-3" fill="none" stroke="#111" stroke-width="1.600"/>`, 10, 10, 10, 10)}</button>
      </div>
      <sheet-grid></sheet-grid>
      <div class="strip">
        <div class="nav">${nav.map(([l, d]) => html`<button aria-label=${l}>${icon(svg`<path d=${d} fill="#1f3f78" stroke="#1f3f78" stroke-width=".8"/>`, 10, 10, 10, 10)}</button>`)}</div>
        <div class="sheets">
          <button>SCHW003A-1</button><button class="on">SCHW003A-2</button><button>SCHW003A-3</button>
          <button class="new" aria-label="Νέο φύλλο">${icon(svg`<path d="M4.500 4.500h10v6l-3 3h-7z" fill="#fff" stroke="#4f6690"/><path d="M11 13v-3h3" fill="none" stroke="#4f6690"/><path d="M4 0v8M0 4h8M1 1l6 6M7 1L1 7" stroke="#e79a2c"/>`, 15, 14)}</button>
        </div>
        <div class="fill"></div>
        <div class="hs">
          <i class="sp"></i>
          <button aria-label="Κύλιση αριστερά"><i class="lf"></i></button>
          <div class="hthumb"><i class="hgrip"></i></div>
          <div class="fill"></div>
          <button aria-label="Κύλιση δεξιά"><i class="rt"></i></button>
          <i class="sp"></i>
          <button aria-hidden="true" tabindex="-1"></button>
        </div>
      </div>
      <footer class="status">
        <span class="ready">Έτοιμο</span><span class="fill"></span>
        <div class="views">
          <button class="on" aria-label="Κανονική">${icon(svg`<rect x=".5" y=".5" width="12" height="9" fill="#fff" stroke="#4b5c7c"/><path d="M0 3.500h13M0 6.500h13M4.500 0v10M8.500 0v10" stroke="#4b5c7c"/>`, 13, 10, 13, 10)}</button>
          <button aria-label="Διάταξη">${icon(svg`<rect x=".5" y=".5" width="11" height="10" fill="#b9c3d2" stroke="#6a768a"/><rect x="3.500" y="2.500" width="5" height="6" fill="#fff" stroke="#6a768a"/>`, 12, 11, 12, 11)}</button>
          <button aria-label="Αλλαγές σελίδας">${icon(svg`<rect x=".5" y=".5" width="11" height="10" fill="#e8edf5" stroke="#6a768a"/><path d="M4.500 0v7M8.500 0v7M0 7.500h9" stroke="#6a768a"/>`, 12, 11, 12, 11)}</button>
        </div>
        <span class="pct">90%</span>
        <div class="zoom">
          <button class="zb" aria-label="Σμίκρυνση">${icon(svg`<path d="M1 4.500h7" stroke="#333" stroke-width="1.600"/>`, 9, 9, 9, 9)}</button>
          <input type="range" aria-label="Ζουμ" min="0" max="200" value="86" />
          <button class="zb" aria-label="Μεγέθυνση">${icon(svg`<path d="M1 4.500h7M4.500 1v7" stroke="#333" stroke-width="1.600"/>`, 9, 9, 9, 9)}</button>
        </div>
      </footer>
      <task-bar></task-bar>`;
  }
}
